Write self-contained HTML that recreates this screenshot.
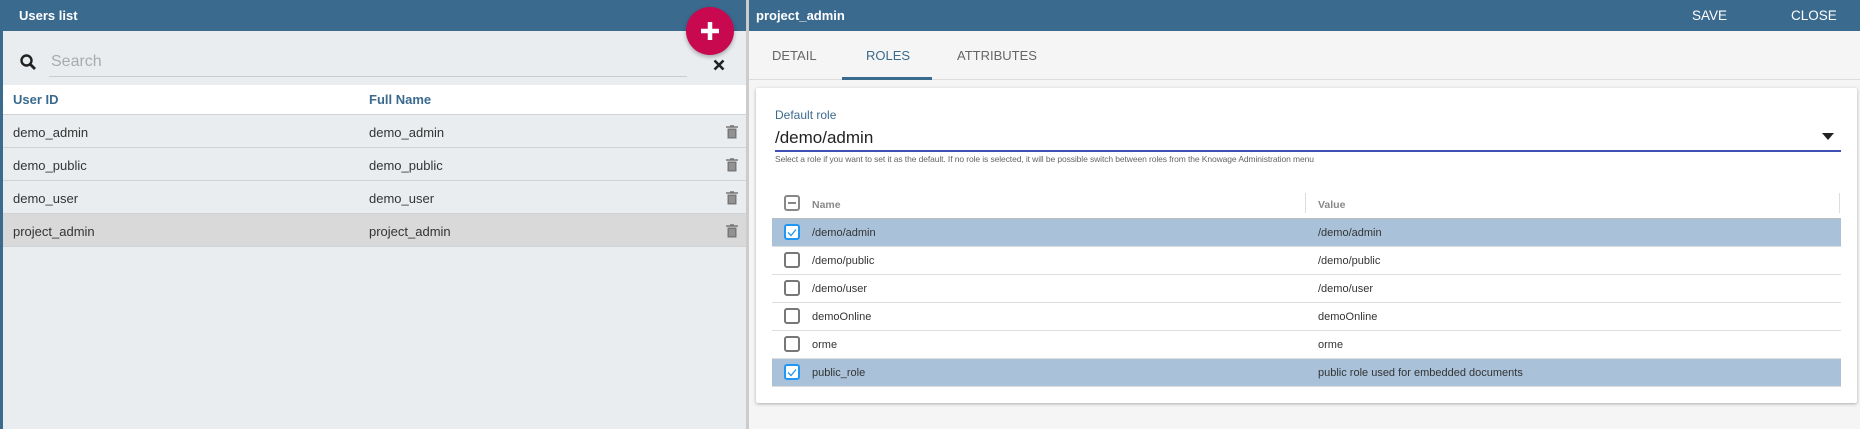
<!DOCTYPE html>
<html><head><style>
*{box-sizing:border-box;margin:0;padding:0}
body{width:1860px;height:429px;overflow:hidden;background:#f5f5f5;font-family:"Liberation Sans",sans-serif;position:relative}
.a{position:absolute}
.hdr{background:#3b6a8f;height:31px;top:0}
.ht{color:#fff;font-weight:bold;font-size:13px;top:8px}
.row{left:3px;width:743px;height:33px;border-bottom:1px solid #cfd3d6;font-size:13px;color:#333}
.row span{position:absolute;top:10px}
.rr{left:772px;width:1069px;height:28px;border-bottom:1px solid #ddd;font-size:11px;color:#333}
.rr span{position:absolute;top:8px}
.cb{position:absolute;left:12px;top:5px;width:16px;height:16px;border:2px solid #777;border-radius:3px;background:#fff}
.sel{background:#a9c2d9}
.sel .cb{border-color:#2196f3}
</style></head><body>
<div class="a" style="left:0;top:0;width:746px;height:429px;background:#eaedf0;border-left:3px solid #3b6a8f"></div>
<div class="a" style="left:746px;top:0;width:3px;height:429px;background:#ccc"></div>
<div class="a hdr" style="left:0;width:746px"></div>
<div class="a ht" style="left:19px">Users list</div>
<svg class="a" style="left:19px;top:53px" width="18" height="18" viewBox="0 0 18 18"><circle cx="7.5" cy="7.5" r="5" fill="none" stroke="#222" stroke-width="2.4"/><path d="M11 11l5 5" stroke="#222" stroke-width="2.8"/></svg>
<div class="a" style="left:51px;top:53px;font-size:16px;color:#aaa">Search</div>
<div class="a" style="left:49px;top:76px;width:638px;height:1px;background:#c8ccd0"></div>
<svg class="a" style="left:713px;top:59px" width="12" height="12" viewBox="0 0 12 12"><path d="M1.5 1.5l9 9M10.5 1.5l-9 9" stroke="#222" stroke-width="2.6"/></svg>
<div class="a" style="left:3px;top:85px;width:743px;height:30px;background:#fff;border-bottom:1px solid #cfd3d6"></div>
<div class="a" style="left:13px;top:92px;font-size:13px;font-weight:bold;color:#3b6a8f">User ID</div>
<div class="a" style="left:369px;top:92px;font-size:13px;font-weight:bold;color:#3b6a8f">Full Name</div>
<div class="a row" style="top:115px"><span style="left:10px">demo_admin</span><span style="left:366px">demo_admin</span></div>
<div class="a row" style="top:148px"><span style="left:10px">demo_public</span><span style="left:366px">demo_public</span></div>
<div class="a row" style="top:181px"><span style="left:10px">demo_user</span><span style="left:366px">demo_user</span></div>
<div class="a row" style="top:214px;background:#d9d9d9"><span style="left:10px">project_admin</span><span style="left:366px">project_admin</span></div>
<svg style="display:none"><symbol id="tr" viewBox="0 0 12 14"><path d="M0 2h12M4 1h4" stroke="#777" stroke-width="1.6"/><path d="M1.5 3.5h9v10h-9z" fill="#777"/><path d="M4 5v7M6 5v7M8 5v7" stroke="#bbb" stroke-width="0.8"/></symbol></svg>
<svg class="a" style="left:726px;top:125px" width="12" height="14"><use href="#tr"/></svg>
<svg class="a" style="left:726px;top:158px" width="12" height="14"><use href="#tr"/></svg>
<svg class="a" style="left:726px;top:191px" width="12" height="14"><use href="#tr"/></svg>
<svg class="a" style="left:726px;top:224px" width="12" height="14"><use href="#tr"/></svg>
<div class="a" style="left:686px;top:7px;width:48px;height:48px;border-radius:50%;background:#c8084f;box-shadow:0 2px 4px rgba(0,0,0,.3)"></div>
<svg class="a" style="left:699px;top:20px" width="22" height="22"><path d="M11 2v18M2 11h18" stroke="#fff" stroke-width="4.5"/></svg>
<div class="a hdr" style="left:749px;width:1111px"></div>
<div class="a ht" style="left:756px">project_admin</div>
<div class="a ht" style="left:1692px;font-weight:normal;font-size:13.5px">SAVE</div>
<div class="a ht" style="left:1791px;font-weight:normal;font-size:13.5px">CLOSE</div>
<div class="a" style="left:749px;top:79px;width:1111px;height:1px;background:#ddd"></div>
<div class="a" style="left:772px;top:48px;font-size:13px;color:#666">DETAIL</div>
<div class="a" style="left:866px;top:48px;font-size:13px;color:#3b6a8f">ROLES</div>
<div class="a" style="left:957px;top:48px;font-size:13px;color:#666">ATTRIBUTES</div>
<div class="a" style="left:842px;top:77px;width:90px;height:3px;background:#3b6a8f"></div>
<div class="a" style="left:756px;top:88px;width:1101px;height:315px;background:#fff;border-radius:2px;box-shadow:0 1px 3px rgba(0,0,0,.3)"></div>
<div class="a" style="left:775px;top:108px;font-size:12px;color:#3b6a8f">Default role</div>
<div class="a" style="left:775px;top:128px;font-size:17px;color:#222">/demo/admin</div>
<div class="a" style="left:775px;top:150px;width:1066px;height:2px;background:#3f51b5"></div>
<svg class="a" style="left:1822px;top:133px" width="12" height="8"><path d="M0 0h12L6 7z" fill="#222"/></svg>
<div class="a" style="left:775px;top:154px;font-size:8.5px;color:#666;letter-spacing:-0.1px">Select a role if you want to set it as the default. If no role is selected, it will be possible switch between roles from the Knowage Administration menu</div>
<div class="a" style="left:772px;top:190px;width:1069px;height:29px;border-bottom:1px solid #bbb"></div>
<div class="a" style="left:784px;top:195px;width:16px;height:16px;border:2px solid #888;border-radius:3px"><div style="position:absolute;left:2px;top:5px;width:8px;height:2px;background:#888"></div></div>
<div class="a" style="left:812px;top:199px;font-size:10.5px;font-weight:bold;color:#888">Name</div>
<div class="a" style="left:1305px;top:193px;width:1px;height:20px;background:#ddd"></div>
<div class="a" style="left:1318px;top:199px;font-size:10.5px;font-weight:bold;color:#888">Value</div>
<div class="a" style="left:1839px;top:193px;width:1px;height:20px;background:#ddd"></div>
<svg style="display:none"><symbol id="ck" viewBox="0 0 12 12"><path d="M2 6.5l3 3 5-6" fill="none" stroke="#2196f3" stroke-width="1.3"/></symbol></svg>
<div class="a rr sel" style="top:219px"><div class="cb"><svg width="12" height="12"><use href="#ck"/></svg></div><span style="left:40px">/demo/admin</span><span style="left:546px">/demo/admin</span></div>
<div class="a rr" style="top:247px"><div class="cb"></div><span style="left:40px">/demo/public</span><span style="left:546px">/demo/public</span></div>
<div class="a rr" style="top:275px"><div class="cb"></div><span style="left:40px">/demo/user</span><span style="left:546px">/demo/user</span></div>
<div class="a rr" style="top:303px"><div class="cb"></div><span style="left:40px">demoOnline</span><span style="left:546px">demoOnline</span></div>
<div class="a rr" style="top:331px"><div class="cb"></div><span style="left:40px">orme</span><span style="left:546px">orme</span></div>
<div class="a rr sel" style="top:359px"><div class="cb"><svg width="12" height="12"><use href="#ck"/></svg></div><span style="left:40px">public_role</span><span style="left:546px">public role used for embedded documents</span></div>
</body></html>
